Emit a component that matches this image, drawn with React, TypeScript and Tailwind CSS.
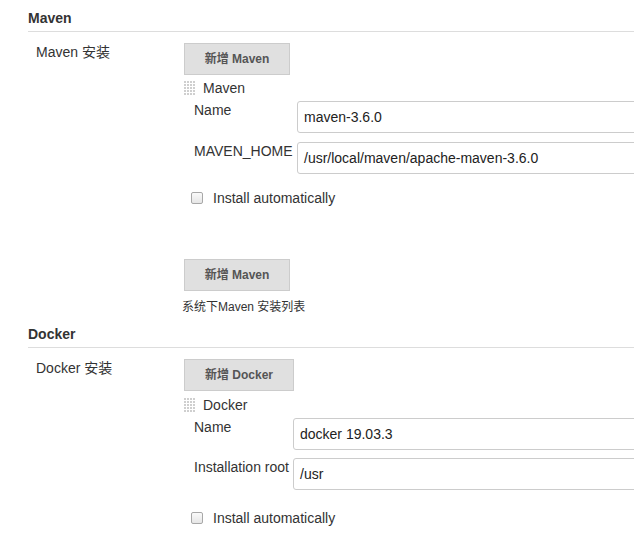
const Handle = () => (
  <svg width="11" height="14" viewBox="0 0 11 14" className="shrink-0">
    {[0, 3, 6, 9].map((x) =>
      [0, 3, 6, 9, 12].map((y) => (
        <rect key={`${x}-${y}`} x={x} y={y} width="2" height="2" fill="#cfcfcf" />
      ))
    )}
  </svg>
);

const Field = ({ label, value, labelW, className = "" }: { label: string; value: string; labelW: string; className?: string }) => (
  <div className={`flex ${className}`}>
    <div className={`${labelW} shrink-0 pl-[10px] text-[14px] leading-[18px] text-[#333]`}>{label}</div>
    <div className="flex h-[32px] w-[420px] shrink-0 items-center rounded-l-[3px] border border-[#cccccc] bg-white pl-[6px] text-[14px] text-[#222]">
      {value}
    </div>
  </div>
);

const Checkbox = ({ className = "" }: { className?: string }) => (
  <div className={`flex h-[16px] items-center pl-[7px] ${className}`}>
    <div className="h-[12px] w-[12px] rounded-[2px] border border-[#a8a8a8] bg-gradient-to-b from-[#fafafa] to-[#e6e6e6]" />
    <span className="ml-[10px] text-[14px] text-[#333]">Install automatically</span>
  </div>
);

const AddButton = ({ text, w, className = "" }: { text: string; w: string; className?: string }) => (
  <div className={`flex h-[32px] ${w} items-center justify-center border border-[#cccccc] bg-[#e0e0e0] text-[12px] font-bold text-[#555] ${className}`}>
    {text}
  </div>
);

const Heading = ({ title }: { title: string }) => (
  <div className="border-b border-[#dddddd] pt-[10px] pb-[5px] text-[14px] font-bold leading-[16px] text-[#333]">
    {title}
  </div>
);

const App = () => {
  return (
    <div className="h-[545px] w-[634px] overflow-hidden bg-white pl-[28px] font-['Liberation_Sans','Noto_Sans_CJK_SC',sans-serif] text-[#333]">
      <section>
        <Heading title="Maven" />
        <div className="flex">
          <div className="w-[156px] shrink-0 pl-[8px] pt-[10px] text-[14px] leading-[20px]">Maven 安装</div>
          <div className="flex flex-col">
            <AddButton text="新增 Maven" w="w-[106px]" className="mt-[11px]" />
            <div className="mt-[5px] flex h-[16px] items-center">
              <Handle />
              <span className="ml-[8px] text-[14px]">Maven</span>
            </div>
            <Field label="Name" value="maven-3.6.0" labelW="w-[113px]" className="mt-[5px]" />
            <Field label="MAVEN_HOME" value="/usr/local/maven/apache-maven-3.6.0" labelW="w-[113px]" className="mt-[9px]" />
            <Checkbox className="mt-[16px]" />
            <AddButton text="新增 Maven" w="w-[106px]" className="mt-[53px]" />
            <div className="ml-[-2px] mt-[8px] text-[12px] leading-[16px]">系统下Maven 安装列表</div>
          </div>
        </div>
      </section>
      <section className="mt-[1px]">
        <Heading title="Docker" />
        <div className="flex">
          <div className="w-[156px] shrink-0 pl-[8px] pt-[10px] text-[14px] leading-[20px]">Docker 安装</div>
          <div className="flex flex-col">
            <AddButton text="新增 Docker" w="w-[110px]" className="mt-[11px]" />
            <div className="mt-[6px] flex h-[16px] items-center">
              <Handle />
              <span className="ml-[8px] text-[14px]">Docker</span>
            </div>
            <Field label="Name" value="docker 19.03.3" labelW="w-[109px]" className="mt-[5px]" />
            <Field label="Installation root" value="/usr" labelW="w-[109px]" className="mt-[8px]" />
            <Checkbox className="mt-[20px]" />
          </div>
        </div>
      </section>
    </div>
  );
};

export default App;
